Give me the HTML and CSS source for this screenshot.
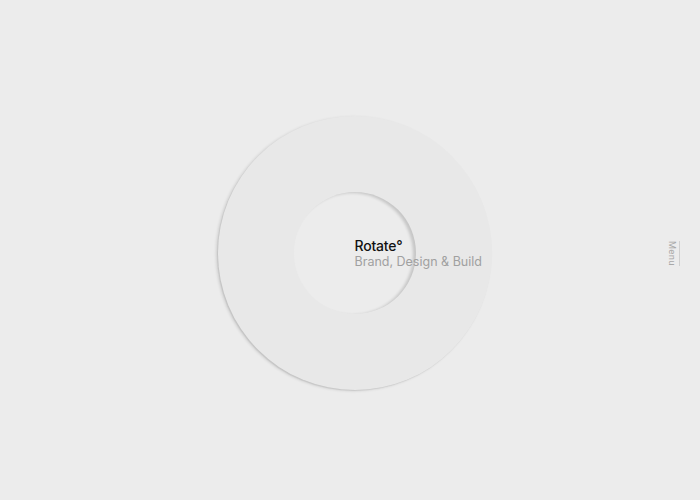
FILE: index.html
```html
<!DOCTYPE html>
<html>
<head>
<meta charset="utf-8">
<link rel="stylesheet" href="styles.css">
</head>
<body>
<main class="stage">
  <div class="disc">
    <div class="hole"></div>
    <div class="brand">
      <div class="brand-name">Rotate°</div>
      <div class="brand-tag">Brand, Design &amp; Build</div>
    </div>
  </div>
  <nav class="menu">Menu</nav>
</main>
</body>
</html>
```
FILE: styles.css
```css
html, body {
  margin: 0;
  padding: 0;
  background: #ececec;
}
.stage {
  width: 700px;
  height: 500px;
  box-sizing: border-box;
  padding: 6px 0 0 9px;
  display: flex;
  align-items: center;
  justify-content: center;
  position: relative;
  font-family: Inter, "Liberation Sans", sans-serif;
}
.disc {
  width: 274px;
  height: 274px;
  border-radius: 50%;
  background: #e8e8e8;
  box-shadow: -2px 1px 3px rgba(0,0,0,0.12), -1px 1px 1px rgba(0,0,0,0.07);
  display: flex;
  align-items: center;
  justify-content: center;
  position: relative;
}
.hole {
  width: 122px;
  height: 122px;
  border-radius: 50%;
  background: #ececec;
  box-shadow: inset -3px 1px 3px rgba(0,0,0,0.16);
}
.brand {
  position: absolute;
  left: 137px;
  top: 122px;
  line-height: 16px;
  white-space: nowrap;
}
.brand-name {
  font-size: 14px;
  font-weight: 500;
  color: #111;
  letter-spacing: -0.2px;
}
.brand-tag {
  font-size: 12.5px;
  color: #a0a0a0;
}
.menu {
  position: absolute;
  left: 667px;
  top: 241px;
  writing-mode: vertical-rl;
  font-size: 9px;
  color: #a8a8a8;
  border-right: 1px solid #d0d0d0;
  padding-right: 1px;
  letter-spacing: 0.2px;
}
```
